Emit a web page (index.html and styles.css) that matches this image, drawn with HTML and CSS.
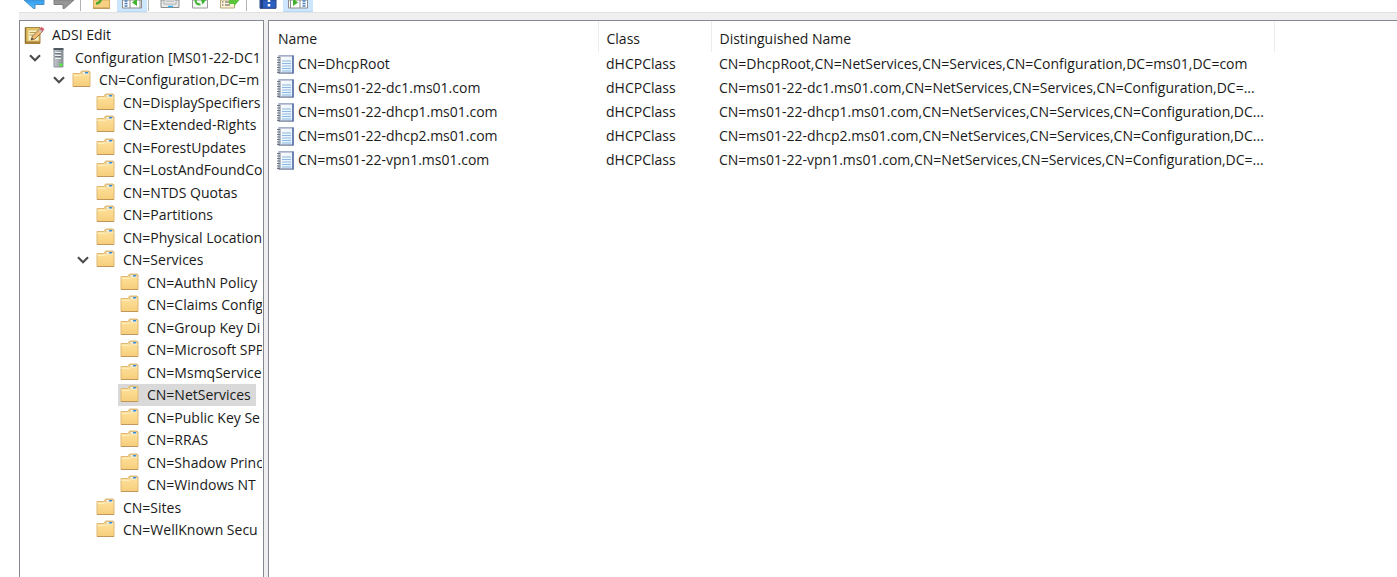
FILE: index.html
```html
<!DOCTYPE html>
<html lang="en">
<head>
<meta charset="utf-8">
<title>ADSI Edit</title>
<link rel="stylesheet" href="styles.css">
</head>
<body>
<svg class="defs" width="0" height="0" aria-hidden="true">
  <defs>
    <linearGradient id="gold" x1="0" y1="0" x2="0" y2="1"><stop offset="0" stop-color="#ffe4a0"/><stop offset="1" stop-color="#f6ce7b"/></linearGradient>
    <linearGradient id="steel" x1="0" y1="0" x2="1" y2="0"><stop offset="0" stop-color="#c4c9cd"/><stop offset="1" stop-color="#868e95"/></linearGradient>
    <linearGradient id="sky" x1="0" y1="0" x2="0" y2="1"><stop offset="0" stop-color="#2f9cf0"/><stop offset="1" stop-color="#58bdfa"/></linearGradient>
    <linearGradient id="page" x1="0" y1="0" x2="1" y2="1"><stop offset="0" stop-color="#ffffff"/><stop offset="1" stop-color="#dcebfa"/></linearGradient>
    <symbol id="folder" viewBox="0 0 18 18">
      <path d="M.5 3.500h7L9 1h7.500l1 1v14.500H.5z" fill="url(#gold)" stroke="#dfb873"/>
      <path d="M10 1.500h6.500v2.700H9z" fill="#f6f2e2" stroke="#c9a55d" stroke-width=".6"/>
      <path d="M12.500 2h3v1.600h-3z" fill="#388ddd"/>
      <path d="M1 5.300h8l1-1h7" fill="none" stroke="#fff0c2"/>
      <path d="M.5 16.500h17" stroke="#c0965a"/>
    </symbol>
    <symbol id="leaf" viewBox="0 0 18 19">
      <path d="M2.500.8h14v17.400h-14z" fill="url(#page)" stroke="#8796b8" stroke-width="1.200"/>
      <path d="M2 18h14.500" stroke="#8b94a5"/>
      <path d="M16.500 .5v18" stroke="#5f78ad" stroke-width="1.700"/>
      <path d="M5.500 6h9M5.500 8.500h9M5.500 11h9M5.500 13.500h9M5.500 16h9" stroke="#8dbae4" stroke-width="1.200"/>
      <path d="M3.500 1.500v16" stroke="#b4bac5" stroke-width="2"/>
      <path d="M.5 2.500h3M.5 5h3M.5 7.500h3M.5 10h3M.5 12.500h3M.5 15h3M.5 17.300h3" stroke="#70767f" stroke-width="1.200"/>
    </symbol>
    <symbol id="chev" viewBox="0 0 12 8"><path d="M1 1.300l5 5 5-5" fill="none" stroke="#4d4d4d" stroke-width="2.200"/></symbol>
  </defs>
</svg>
<main class="window">
  <div class="toolbar" role="toolbar" aria-label="Standard">
    <button class="tool" aria-label="Back"><svg width="22" height="10" viewBox="0 0 22 10"><path d="M1 0l9.500 8.500h1.500V4.500h9V0z" fill="url(#sky)" stroke="#4c8fc4"/></svg></button>
    <button class="tool" aria-label="Forward"><svg width="22" height="10" viewBox="0 0 22 10"><path d="M21 0l-9.500 8.500H10V4.500H1V0z" fill="#969696" stroke="#808080"/></svg></button>
    <span class="sep"></span>
    <button class="tool" aria-label="Up one level"><svg width="20" height="10" viewBox="0 0 20 10"><path d="M1.500 0h16v8H1.500z" fill="#f7d082" stroke="#d5ab62"/><path d="M1 8.300h17" stroke="#b98d4c"/><path d="M4 3.500C7 3.500 8 2 9 0" fill="none" stroke="#4fa832" stroke-width="2.500"/></svg></button>
    <button class="tool on" aria-label="Show console tree"><svg width="20" height="10" viewBox="0 0 20 10"><path d="M.5 0h19v8H.5z" fill="#fff" stroke="#8c8c8c"/><path d="M2.500 1h3M2.500 3.500h3M2.500 6h3" stroke="#477dbd" stroke-width="1.500"/><path d="M8 0v8M18 0v8" stroke="#8c8c8c"/><path d="M15 0v6l-5-3.500L13 0z" fill="#40b42c"/></svg></button>
    <span class="sep"></span>
    <button class="tool" aria-label="Properties"><svg width="20" height="10" viewBox="0 0 20 10"><path d="M1 0h18v7.500H1z" fill="#e6e8ea" stroke="#8c8c8c"/><path d="M4 0h12v4H4z" fill="#fff" stroke="#a6a6a6"/><path d="M5.500 1.800h9" stroke="#aaa"/><path d="M8 6.500h5" stroke="#35b1ee" stroke-width="1.500"/></svg></button>
    <button class="tool" aria-label="Refresh"><svg width="20" height="10" viewBox="0 0 20 10"><path d="M2.500 0h15v8h-15z" fill="#f7f9f7" stroke="#9a9a9a"/><path d="M5.500 0c0 3 2 4.500 5 4.500" fill="none" stroke="#3fb32f" stroke-width="2"/><path d="M12.500 4.500L11 0h5z" fill="#3fb32f"/></svg></button>
    <button class="tool" aria-label="Export list"><svg width="20" height="10" viewBox="0 0 20 10"><path d="M.5 0h14v8H.5z" fill="#fff4d6" stroke="#b3a77f"/><path d="M2 2h1.500M2 5h1.500M5 2h5M5 5h5" stroke="#555" stroke-width="1.200"/><path d="M9 0h10.500l-5.500 6.500V4H9z" fill="#5cc33c"/></svg></button>
    <span class="sep"></span>
    <button class="tool" aria-label="Help"><svg width="18" height="10" viewBox="0 0 18 10"><path d="M1 0h16v8.300H1z" fill="#2b5fc0" stroke="#2a4382"/><path d="M3 0v8" stroke="#1f3f88" stroke-width="2"/><path d="M10 0v2M10 4v2.500" stroke="#fff" stroke-width="2.500"/></svg></button>
    <button class="tool on" aria-label="Show action pane"><svg width="20" height="10" viewBox="0 0 20 10"><path d="M.5 0h19v8H.5z" fill="#fff" stroke="#8c8c8c"/><path d="M14.500 1h3M14.500 3.500h3M14.500 6h3" stroke="#477dbd" stroke-width="1.500"/><path d="M12 0v8M2.500 0v8" stroke="#8c8c8c"/><path d="M5 0v6l5-3.500L7 0z" fill="#40b42c"/></svg></button>
  </div>
  <div class="panes">
    <nav class="tree-pane" aria-label="Console tree">
      <ul class="tree" role="tree">
        <li class="node root" role="treeitem" aria-level="1"><svg class="icon-edit" viewBox="0 0 21 19"><path d="M1.500 1.500h14.500v16H1.500z" fill="#dfc065" stroke="#a98542"/><path d="M1.500 1.500v16" stroke="#8e6f31" stroke-width="1.500"/><path d="M4.500 4.500h10v10h-10z" fill="#f8f1c6"/><path d="M5.500 6.500h6M5.500 9h4" stroke="#b89b4e"/><path d="M2 15.500h14v2H2z" fill="#a98038"/><path d="M7 14l1.500-4L16 2.500l3 2.500-8 8z" fill="#f0bb72" stroke="#80603e" stroke-width=".8"/><path d="M15.500 3L17.500.8l3 2.500L18.500 5.500z" fill="#d5606c"/><path d="M15 3.500l3 2.500" stroke="#b8c3cf" stroke-width="1.200"/><path d="M7 14l.8-2.500 1.700 1.500z" fill="#444"/></svg><span class="label">ADSI Edit</span></li>
        <li class="node l1" role="treeitem" aria-level="2"><svg class="chev"><use href="#chev"/></svg><svg class="icon-server" viewBox="0 0 18 20"><path d="M5.500 1h9v18h-9z" fill="url(#steel)" stroke="#8c949b"/><path d="M5 1h10" stroke="#505a63" stroke-width="2"/><path d="M6.500 4.500h6M6.500 7.500h6M6.500 10.500h6" stroke="#eef1f3"/><path d="M6.500 5.500h6M6.500 8.500h6" stroke="#606a72" stroke-width=".8"/><path d="M11 15.500h3V18h-3z" fill="#4df032"/></svg><span class="label">Configuration [MS01-22-DC1</span></li>
        <li class="node l2" role="treeitem" aria-level="3"><svg class="chev"><use href="#chev"/></svg><svg class="icon"><use href="#folder"/></svg><span class="label">CN=Configuration,DC=m</span></li>
        <li class="node l3" role="treeitem" aria-level="4"><svg class="icon"><use href="#folder"/></svg><span class="label">CN=DisplaySpecifiers</span></li>
        <li class="node l3" role="treeitem" aria-level="4"><svg class="icon"><use href="#folder"/></svg><span class="label">CN=Extended-Rights</span></li>
        <li class="node l3" role="treeitem" aria-level="4"><svg class="icon"><use href="#folder"/></svg><span class="label">CN=ForestUpdates</span></li>
        <li class="node l3" role="treeitem" aria-level="4"><svg class="icon"><use href="#folder"/></svg><span class="label">CN=LostAndFoundCo</span></li>
        <li class="node l3" role="treeitem" aria-level="4"><svg class="icon"><use href="#folder"/></svg><span class="label">CN=NTDS Quotas</span></li>
        <li class="node l3" role="treeitem" aria-level="4"><svg class="icon"><use href="#folder"/></svg><span class="label">CN=Partitions</span></li>
        <li class="node l3" role="treeitem" aria-level="4"><svg class="icon"><use href="#folder"/></svg><span class="label">CN=Physical Location</span></li>
        <li class="node l3 open" role="treeitem" aria-level="4"><svg class="chev"><use href="#chev"/></svg><svg class="icon"><use href="#folder"/></svg><span class="label">CN=Services</span></li>
        <li class="node l4" role="treeitem" aria-level="5"><svg class="icon"><use href="#folder"/></svg><span class="label">CN=AuthN Policy</span></li>
        <li class="node l4" role="treeitem" aria-level="5"><svg class="icon"><use href="#folder"/></svg><span class="label">CN=Claims Config</span></li>
        <li class="node l4" role="treeitem" aria-level="5"><svg class="icon"><use href="#folder"/></svg><span class="label">CN=Group Key Di</span></li>
        <li class="node l4" role="treeitem" aria-level="5"><svg class="icon"><use href="#folder"/></svg><span class="label">CN=Microsoft SPP</span></li>
        <li class="node l4" role="treeitem" aria-level="5"><svg class="icon"><use href="#folder"/></svg><span class="label">CN=MsmqService</span></li>
        <li class="node l4" role="treeitem" aria-level="5" aria-selected="true"><span class="selected"><svg class="icon"><use href="#folder"/></svg><span class="label">CN=NetServices</span></span></li>
        <li class="node l4" role="treeitem" aria-level="5"><svg class="icon"><use href="#folder"/></svg><span class="label">CN=Public Key Se</span></li>
        <li class="node l4" role="treeitem" aria-level="5"><svg class="icon"><use href="#folder"/></svg><span class="label">CN=RRAS</span></li>
        <li class="node l4" role="treeitem" aria-level="5"><svg class="icon"><use href="#folder"/></svg><span class="label">CN=Shadow Princ</span></li>
        <li class="node l4" role="treeitem" aria-level="5"><svg class="icon"><use href="#folder"/></svg><span class="label">CN=Windows NT</span></li>
        <li class="node l3" role="treeitem" aria-level="4"><svg class="icon"><use href="#folder"/></svg><span class="label">CN=Sites</span></li>
        <li class="node l3" role="treeitem" aria-level="4"><svg class="icon"><use href="#folder"/></svg><span class="label">CN=WellKnown Secu</span></li>
      </ul>
    </nav>
    <section class="list-pane" aria-label="Objects">
      <table class="list">
        <colgroup><col class="c-name"><col class="c-class"><col class="c-dn"><col></colgroup>
        <thead><tr><th scope="col">Name</th><th scope="col">Class</th><th scope="col">Distinguished Name</th><td></td></tr></thead>
        <tbody>
          <tr><td><span class="object"><svg class="icon-leaf"><use href="#leaf"/></svg>CN=DhcpRoot</span></td><td>dHCPClass</td><td>CN=DhcpRoot,CN=NetServices,CN=Services,CN=Configuration,DC=ms01,DC=com</td><td></td></tr>
          <tr><td><span class="object"><svg class="icon-leaf"><use href="#leaf"/></svg>CN=ms01-22-dc1.ms01.com</span></td><td>dHCPClass</td><td>CN=ms01-22-dc1.ms01.com,CN=NetServices,CN=Services,CN=Configuration,DC=...</td><td></td></tr>
          <tr><td><span class="object"><svg class="icon-leaf"><use href="#leaf"/></svg>CN=ms01-22-dhcp1.ms01.com</span></td><td>dHCPClass</td><td>CN=ms01-22-dhcp1.ms01.com,CN=NetServices,CN=Services,CN=Configuration,DC...</td><td></td></tr>
          <tr><td><span class="object"><svg class="icon-leaf"><use href="#leaf"/></svg>CN=ms01-22-dhcp2.ms01.com</span></td><td>dHCPClass</td><td>CN=ms01-22-dhcp2.ms01.com,CN=NetServices,CN=Services,CN=Configuration,DC...</td><td></td></tr>
          <tr><td><span class="object"><svg class="icon-leaf"><use href="#leaf"/></svg>CN=ms01-22-vpn1.ms01.com</span></td><td>dHCPClass</td><td>CN=ms01-22-vpn1.ms01.com,CN=NetServices,CN=Services,CN=Configuration,DC=...</td><td></td></tr>
        </tbody>
      </table>
    </section>
  </div>
</main>
</body>
</html>
```
FILE: styles.css
```css
* { box-sizing: border-box; }
body {
  margin: 0;
  background: #fff;
  color: #1a1a1a;
  font: 14px/20px "Open Sans", "Noto Sans", sans-serif;
}
.defs { display: block; height: 0; }
.window {
  display: flex;
  flex-direction: column;
  height: 100vh;
  margin-left: 19px;
  overflow: hidden;
}
.toolbar {
  display: flex;
  align-items: flex-start;
  height: 13px;
  border-bottom: 1px solid #e2e2e2;
}
.tool {
  display: flex;
  justify-content: center;
  width: 30px;
  height: 12px;
  padding: 0;
  border: 0;
  background: none;
}
.tool svg { flex: none; }
.tool.on { background: #cce6fd; border-bottom: 1px solid #b5dafa; }
.sep { width: 1px; height: 11px; margin: 0 6px 0 1px; background: #b4b4b4; }
.panes {
  display: flex;
  flex: 1;
  gap: 4px;
  min-height: 0;
  padding-top: 7px;
  background: #efefef;
}
.tree-pane, .list-pane {
  overflow: hidden;
  background: #fff;
  border: solid #848992;
}
.tree-pane { flex: none; width: 245px; padding-right: 1px; border-width: 1px 1px 0; }
.list-pane { flex: 1; border-width: 1px 0 0 1px; }
.tree { margin: 0; padding: 3px 0 0; overflow: hidden; list-style: none; }
.node {
  display: flex;
  align-items: center;
  height: 22px;
  white-space: nowrap;
}
.node:nth-child(even) { height: 23px; }
.label { padding-left: 8px; }
.root { padding-left: 4px; }
.root .label { padding-left: 7px; }
.l1 { padding-left: 9px; }
.l2 { padding-left: 33px; }
.l3 { padding-left: 76px; }
.l3.open { padding-left: 57px; }
.l4 { padding-left: 100px; }
.chev { flex: none; width: 12px; height: 8px; margin-right: 7px; }
.icon { flex: none; width: 19px; height: 18px; margin-bottom: 2px; }
.icon-edit { flex: none; width: 21px; height: 19px; }
.icon-server { flex: none; width: 19px; height: 20px; }
.selected {
  display: flex;
  align-items: center;
  height: 22px;
  margin-left: -2px;
  padding: 0 5px 0 2px;
  background: #d9d9d9;
}
.list { width: 100%; border-collapse: collapse; table-layout: fixed; }
.c-name { width: 329px; }
.c-class { width: 113px; }
.c-dn { width: 563px; }
.list th, .list td {
  height: 24px;
  padding: 0 0 0 8px;
  font-weight: 400;
  text-align: left;
  white-space: nowrap;
}
.list thead th { height: 31px; padding-top: 4px; border-right: 1px solid #ececec; }
.list th:first-child { padding-left: 9px; }
.list td:first-child { padding-left: 7px; }
.object { display: flex; align-items: center; gap: 3px; }
.icon-leaf { flex: none; width: 19px; height: 19px; }
```
